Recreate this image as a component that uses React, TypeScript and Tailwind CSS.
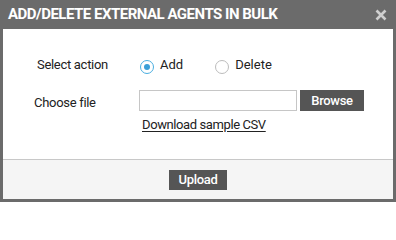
import React, { useState } from 'react';

const App = () => {
  const [action, setAction] = useState<'add' | 'delete'>('add');

  const Radio = ({ value, label }: { value: 'add' | 'delete'; label: string }) => {
    const checked = action === value;
    return (
      <label className="flex items-center cursor-pointer" onClick={() => setAction(value)}>
        <span
          className={`flex items-center justify-center w-[14px] h-[14px] rounded-full border bg-white translate-y-[2px] ${
            checked ? 'border-[#4aaee0]' : 'border-[#bcbcbc]'
          }`}
        >
          {checked && <span className="w-[6px] h-[6px] rounded-full bg-[#3a9fd8]" />}
        </span>
        <span className="ml-[6px] text-[13px]">{label}</span>
      </label>
    );
  };

  return (
    <div className="w-[396px] h-[202px] bg-[#6b6b6b] flex flex-col px-[3px] pb-[3px] font-['Roboto',sans-serif] text-[12px] text-[#222]">
      {/* Title bar */}
      <div className="h-[29px] flex items-center justify-between pl-[5px] pr-[6px]">
        <span className="text-white font-bold text-[15px] tracking-[-0.5px]">ADD/DELETE EXTERNAL AGENTS IN BULK</span>
        <button className="text-[#cfcfcf] leading-none">
          <svg width="12" height="12" viewBox="0 0 12 12">
            <path d="M1.5 1.5 L10.5 10.5 M10.5 1.5 L1.5 10.5" stroke="currentColor" strokeWidth="2.6" />
          </svg>
        </button>
      </div>

      {/* Body */}
      <div className="bg-white flex-1 flex flex-col pt-[26px]">
        <div className="flex items-center h-[20px]">
          <span className="w-[137px] pl-[34px] text-[13px] tracking-[-0.3px]">Select action</span>
          <div className="flex items-center gap-[32px]">
            <Radio value="add" label="Add" />
            <Radio value="delete" label="Delete" />
          </div>
        </div>

        <div className="flex mt-[15px]">
          <span className="w-[136px] pl-[31px] pt-[3px] text-[13px] tracking-[-0.3px]">Choose file</span>
          <div className="flex flex-col">
            <div className="flex items-center">
              <input type="text" className="w-[158px] h-[21px] border border-[#c6c6c6] outline-none" />
              <button className="ml-[3px] w-[64px] h-[21px] bg-[#555555] text-white text-[13px] font-medium tracking-[-0.3px]">
                Browse
              </button>
            </div>
            <a href="#" className="ml-[3px] mt-[4px] text-[13px] tracking-[-0.4px] underline underline-offset-[2px] text-[#222]">
              Download sample CSV
            </a>
          </div>
        </div>
      </div>

      {/* Footer */}
      <div className="h-[40px] bg-[#f5f5f5] border-t border-[#c8c8c8] flex items-center justify-center">
        <button className="w-[58px] h-[20px] bg-[#555555] text-white text-[13px] font-medium tracking-[-0.3px]">Upload</button>
      </div>
    </div>
  );
};

export default App;
